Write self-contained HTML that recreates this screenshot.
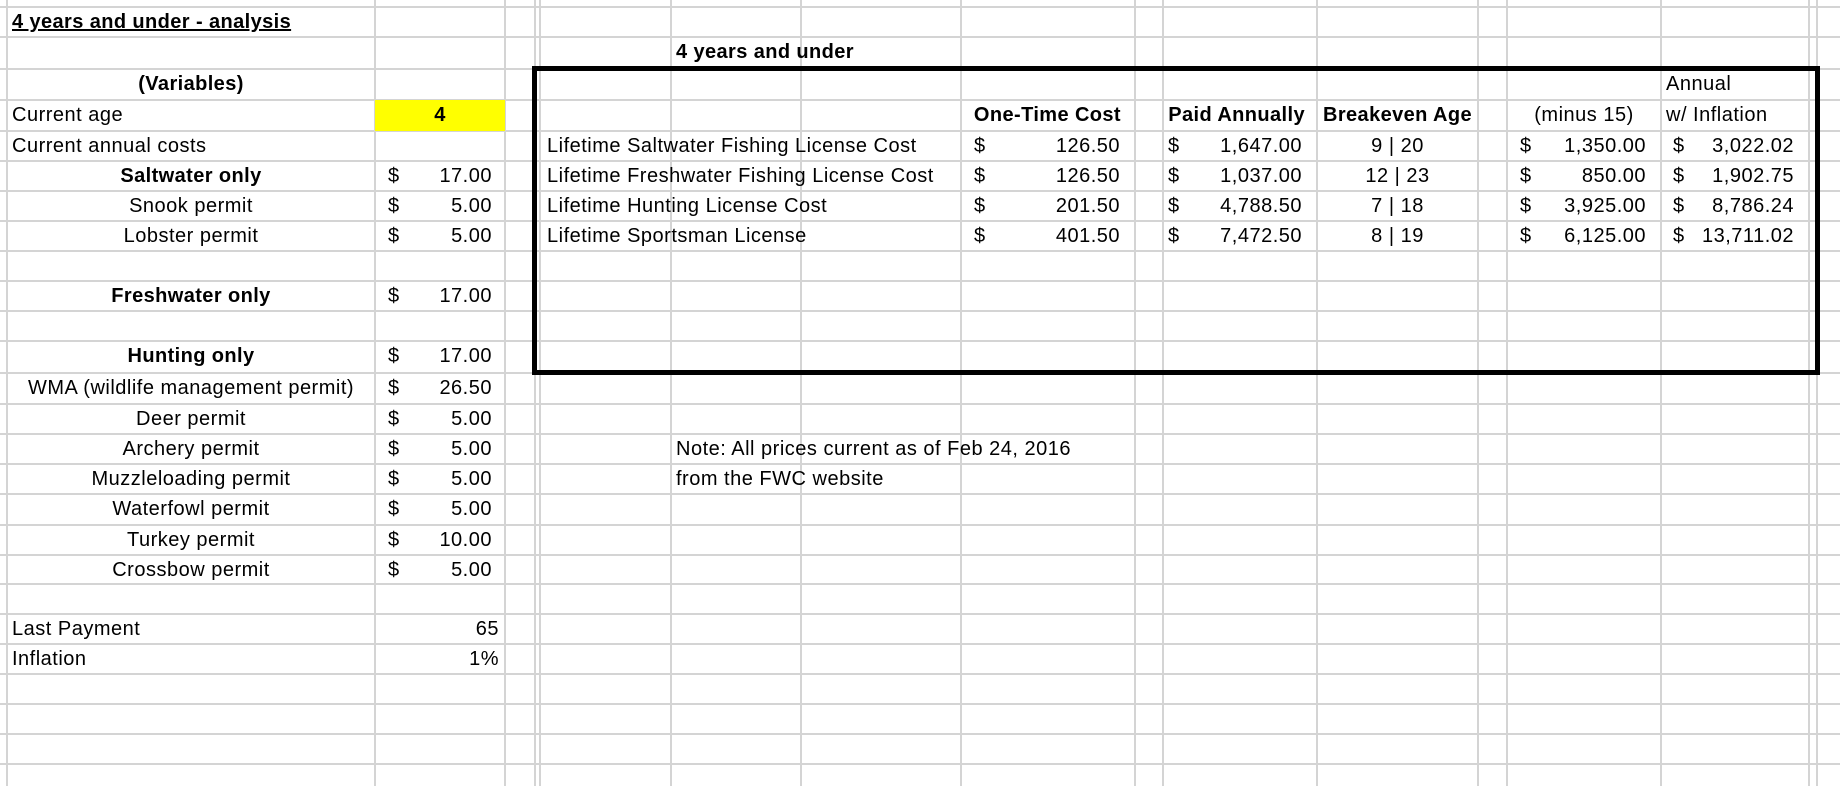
<!DOCTYPE html>
<html><head><meta charset="utf-8"><style>
html,body{margin:0;padding:0;background:#fff;}
body{width:1840px;height:786px;position:relative;overflow:hidden;font-family:"Liberation Sans",Arial,sans-serif;color:#000;}
.h{position:absolute;left:0;width:1840px;height:2px;background:#d4d4d4;}
.v{position:absolute;top:0;height:786px;width:2px;background:#d4d4d4;}
.t{position:absolute;height:30px;line-height:31px;font-size:20px;letter-spacing:0.5px;white-space:nowrap;}
.b{font-weight:bold;letter-spacing:0.4px;}
.c{text-align:center;}
.r{text-align:right;}
</style></head><body>
<div class="h" style="top:6px"></div><div class="h" style="top:36px"></div><div class="h" style="top:68px"></div>
<div class="h" style="top:99px"></div><div class="h" style="top:130px"></div><div class="h" style="top:160px"></div>
<div class="h" style="top:190px"></div><div class="h" style="top:220px"></div><div class="h" style="top:250px"></div>
<div class="h" style="top:280px"></div><div class="h" style="top:310px"></div><div class="h" style="top:340px"></div>
<div class="h" style="top:372px"></div><div class="h" style="top:403px"></div><div class="h" style="top:433px"></div>
<div class="h" style="top:463px"></div><div class="h" style="top:493px"></div><div class="h" style="top:524px"></div>
<div class="h" style="top:554px"></div><div class="h" style="top:583px"></div><div class="h" style="top:613px"></div>
<div class="h" style="top:643px"></div><div class="h" style="top:673px"></div><div class="h" style="top:703px"></div>
<div class="h" style="top:733px"></div><div class="h" style="top:763px"></div>
<div class="v" style="left:6px"></div><div class="v" style="left:374px"></div><div class="v" style="left:504px"></div>
<div class="v" style="left:534px"></div><div class="v" style="left:539px"></div><div class="v" style="left:670px"></div>
<div class="v" style="left:800px"></div><div class="v" style="left:960px"></div><div class="v" style="left:1134px"></div>
<div class="v" style="left:1162px"></div><div class="v" style="left:1316px"></div><div class="v" style="left:1477px"></div>
<div class="v" style="left:1506px"></div><div class="v" style="left:1660px"></div><div class="v" style="left:1808px"></div>
<div class="v" style="left:1816px"></div>
<div style="position:absolute;left:375px;top:100px;width:130px;height:31px;background:#ffff00;"></div>
<div style="position:absolute;left:532px;top:66px;width:1278px;height:299px;border:5px solid #000;"></div>

<div class="t b" style="left:12px;top:7px;text-decoration:underline;">4 years and under - analysis</div>
<div class="t b c" style="left:7px;width:368px;top:69px;">(Variables)</div>
<div class="t" style="left:12px;top:100px;">Current age</div>
<div class="t b c" style="left:375px;width:130px;top:100px;">4</div>
<div class="t" style="left:12px;top:131px;">Current annual costs</div>

<div class="t b c" style="left:7px;width:368px;top:161px;">Saltwater only</div>
<div class="t c" style="left:7px;width:368px;top:191px;">Snook permit</div>
<div class="t c" style="left:7px;width:368px;top:221px;">Lobster permit</div>
<div class="t b c" style="left:7px;width:368px;top:281px;">Freshwater only</div>
<div class="t b c" style="left:7px;width:368px;top:341px;">Hunting only</div>
<div class="t c" style="left:7px;width:368px;top:373px;">WMA (wildlife management permit)</div>
<div class="t c" style="left:7px;width:368px;top:404px;">Deer permit</div>
<div class="t c" style="left:7px;width:368px;top:434px;">Archery permit</div>
<div class="t c" style="left:7px;width:368px;top:464px;">Muzzleloading permit</div>
<div class="t c" style="left:7px;width:368px;top:494px;">Waterfowl permit</div>
<div class="t c" style="left:7px;width:368px;top:525px;">Turkey permit</div>
<div class="t c" style="left:7px;width:368px;top:555px;">Crossbow permit</div>
<div class="t" style="left:12px;top:614px;">Last Payment</div>
<div class="t" style="left:12px;top:644px;">Inflation</div>

<div class="t" style="left:388px;top:161px;">$</div><div class="t r" style="left:400px;width:92px;top:161px;">17.00</div>
<div class="t" style="left:388px;top:191px;">$</div><div class="t r" style="left:400px;width:92px;top:191px;">5.00</div>
<div class="t" style="left:388px;top:221px;">$</div><div class="t r" style="left:400px;width:92px;top:221px;">5.00</div>
<div class="t" style="left:388px;top:281px;">$</div><div class="t r" style="left:400px;width:92px;top:281px;">17.00</div>
<div class="t" style="left:388px;top:341px;">$</div><div class="t r" style="left:400px;width:92px;top:341px;">17.00</div>
<div class="t" style="left:388px;top:373px;">$</div><div class="t r" style="left:400px;width:92px;top:373px;">26.50</div>
<div class="t" style="left:388px;top:404px;">$</div><div class="t r" style="left:400px;width:92px;top:404px;">5.00</div>
<div class="t" style="left:388px;top:434px;">$</div><div class="t r" style="left:400px;width:92px;top:434px;">5.00</div>
<div class="t" style="left:388px;top:464px;">$</div><div class="t r" style="left:400px;width:92px;top:464px;">5.00</div>
<div class="t" style="left:388px;top:494px;">$</div><div class="t r" style="left:400px;width:92px;top:494px;">5.00</div>
<div class="t" style="left:388px;top:525px;">$</div><div class="t r" style="left:400px;width:92px;top:525px;">10.00</div>
<div class="t" style="left:388px;top:555px;">$</div><div class="t r" style="left:400px;width:92px;top:555px;">5.00</div>
<div class="t r" style="left:400px;width:99px;top:614px;">65</div>
<div class="t r" style="left:400px;width:99px;top:644px;">1%</div>

<div class="t b" style="left:676px;top:37px;">4 years and under</div>
<div class="t" style="left:1666px;top:69px;">Annual</div>
<div class="t b r" style="left:961px;width:160px;top:100px;">One-Time Cost</div>
<div class="t b r" style="left:1163px;width:142px;top:100px;">Paid Annually</div>
<div class="t b c" style="left:1317px;width:161px;top:100px;">Breakeven Age</div>
<div class="t c" style="left:1507px;width:154px;top:100px;">(minus 15)</div>
<div class="t" style="left:1666px;top:100px;">w/ Inflation</div>

<div class="t" style="left:547px;top:131px;">Lifetime Saltwater Fishing License Cost</div>
<div class="t" style="left:547px;top:161px;">Lifetime Freshwater Fishing License Cost</div>
<div class="t" style="left:547px;top:191px;">Lifetime Hunting License Cost</div>
<div class="t" style="left:547px;top:221px;">Lifetime Sportsman License</div>

<div class="t" style="left:974px;top:131px;">$</div><div class="t r" style="left:1000px;width:120px;top:131px;">126.50</div>
<div class="t" style="left:974px;top:161px;">$</div><div class="t r" style="left:1000px;width:120px;top:161px;">126.50</div>
<div class="t" style="left:974px;top:191px;">$</div><div class="t r" style="left:1000px;width:120px;top:191px;">201.50</div>
<div class="t" style="left:974px;top:221px;">$</div><div class="t r" style="left:1000px;width:120px;top:221px;">401.50</div>

<div class="t" style="left:1168px;top:131px;">$</div><div class="t r" style="left:1190px;width:112px;top:131px;">1,647.00</div>
<div class="t" style="left:1168px;top:161px;">$</div><div class="t r" style="left:1190px;width:112px;top:161px;">1,037.00</div>
<div class="t" style="left:1168px;top:191px;">$</div><div class="t r" style="left:1190px;width:112px;top:191px;">4,788.50</div>
<div class="t" style="left:1168px;top:221px;">$</div><div class="t r" style="left:1190px;width:112px;top:221px;">7,472.50</div>

<div class="t c" style="left:1317px;width:161px;top:131px;">9 | 20</div>
<div class="t c" style="left:1317px;width:161px;top:161px;">12 | 23</div>
<div class="t c" style="left:1317px;width:161px;top:191px;">7 | 18</div>
<div class="t c" style="left:1317px;width:161px;top:221px;">8 | 19</div>

<div class="t" style="left:1520px;top:131px;">$</div><div class="t r" style="left:1540px;width:106px;top:131px;">1,350.00</div>
<div class="t" style="left:1520px;top:161px;">$</div><div class="t r" style="left:1540px;width:106px;top:161px;">850.00</div>
<div class="t" style="left:1520px;top:191px;">$</div><div class="t r" style="left:1540px;width:106px;top:191px;">3,925.00</div>
<div class="t" style="left:1520px;top:221px;">$</div><div class="t r" style="left:1540px;width:106px;top:221px;">6,125.00</div>

<div class="t" style="left:1673px;top:131px;">$</div><div class="t r" style="left:1690px;width:104px;top:131px;">3,022.02</div>
<div class="t" style="left:1673px;top:161px;">$</div><div class="t r" style="left:1690px;width:104px;top:161px;">1,902.75</div>
<div class="t" style="left:1673px;top:191px;">$</div><div class="t r" style="left:1690px;width:104px;top:191px;">8,786.24</div>
<div class="t" style="left:1673px;top:221px;">$</div><div class="t r" style="left:1690px;width:104px;top:221px;">13,711.02</div>

<div class="t" style="left:676px;top:434px;">Note: All prices current as of Feb 24, 2016</div>
<div class="t" style="left:676px;top:464px;">from the FWC website</div>
</body></html>
